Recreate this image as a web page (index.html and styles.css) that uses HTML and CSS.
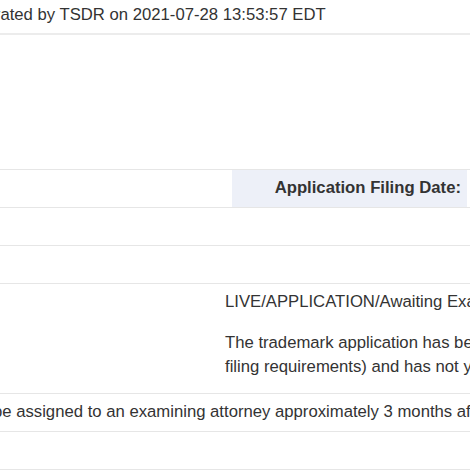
FILE: index.html
```html
<!DOCTYPE html>
<html lang="en">
<head>
<meta charset="utf-8">
<title>TSDR Status</title>
<link rel="stylesheet" href="styles.css">
</head>
<body>
<div class="page">
  <div class="generated">Generated by TSDR on 2021-07-28 13:53:57 EDT</div>
  <div class="mark-area"></div>
  <div class="row row-filing">
    <div class="cell-blank"></div>
    <div class="cell-label">Application Filing Date:</div>
    <div class="cell-value"></div>
  </div>
  <div class="row"></div>
  <div class="row"></div>
  <div class="row row-status">
    <div class="status-gap"></div>
    <div class="status-text">
      <p class="status-code">LIVE/APPLICATION/Awaiting Examination</p>
      <p class="status-desc">The trademark application has been accepted by the Office (has met the minimum<br>filing requirements) and has not yet been assigned to an examiner.</p>
    </div>
  </div>
  <div class="row row-note">be assigned to an examining attorney approximately 3 months after filing.</div>
  <div class="row"></div>
  <div class="row row-last"></div>
</div>
</body>
</html>
```

FILE: styles.css
```css
html, body {
  margin: 0;
  padding: 0;
  background: #ffffff;
  overflow: hidden;
}

body {
  font-family: "Liberation Sans", Arial, Helvetica, sans-serif;
  font-size: 16.7px;
  line-height: 24px;
  color: #333333;
}

.page {
  margin-left: -46px;
  width: 1000px;
}

.generated {
  padding: 3px 0 6px 0;
  border-bottom: 2px solid #ececec;
  white-space: nowrap;
}

.mark-area {
  height: 134px;
}

.row {
  border-top: 1px solid #e6e6e6;
  min-height: 38px;
  box-sizing: border-box;
}

.row-filing {
  display: grid;
  grid-template-columns: 278px 235px 1fr;
}

.cell-label {
  background: #edf0f8;
  font-weight: bold;
  text-align: right;
  padding: 6px 6px 7px 6px;
  white-space: nowrap;
}

.row-status {
  display: grid;
  grid-template-columns: 271px 1fr;
}

.status-text {
  padding: 6px 0 14px 0;
  white-space: nowrap;
}

.status-text p {
  margin: 0;
}

.status-desc {
  margin-top: 17px !important;
}

.row-note {
  padding: 6px 0 7px 39px;
  white-space: nowrap;
}

.row-last {
  min-height: 10px;
}
```
